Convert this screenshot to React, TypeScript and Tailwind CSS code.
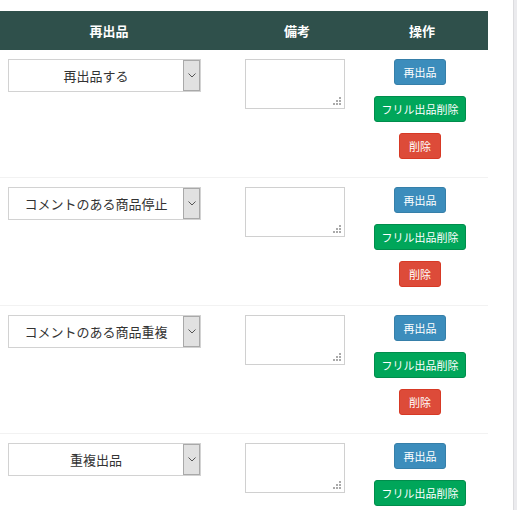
const rows = ["再出品する", "コメントのある商品停止", "コメントのある商品重複", "重複出品"];

function SelectBox({ value }: { value: string }) {
  return (
    <div className="flex h-[33px] w-[193px] border border-[#d2d2d2] bg-white">
      <div className="flex flex-1 items-center justify-center text-[13px] text-[#333]">{value}</div>
      <div className="flex w-[17px] items-center justify-center border border-[#a9a9a9] bg-[#e1e1e1]">
        <svg width="8" height="5" viewBox="0 0 8 5" fill="none">
          <path d="M0.5 0.5 L4 4 L7.5 0.5" stroke="#555" strokeWidth="1" />
        </svg>
      </div>
    </div>
  );
}

function Row({ value }: { value: string }) {
  return (
    <div className="grid h-[128px] grid-cols-[218px_158px_112px] border-b border-[#f2f2f2] pt-[9px]">
      <div className="pl-2">
        <SelectBox value={value} />
      </div>
      <div className="pl-[27px]">
        <div className="relative h-[50px] w-[100px] border border-[#d0d0d0] bg-white">
          <svg className="absolute bottom-[3px] right-[3px]" width="8" height="8" viewBox="0 0 8 8">
            <rect x="6" y="0" width="2" height="2" fill="#aaa" />
            <rect x="3" y="3" width="2" height="2" fill="#aaa" />
            <rect x="6" y="3" width="2" height="2" fill="#aaa" />
            <rect x="0" y="6" width="2" height="2" fill="#aaa" />
            <rect x="3" y="6" width="2" height="2" fill="#aaa" />
            <rect x="6" y="6" width="2" height="2" fill="#aaa" />
          </svg>
        </div>
      </div>
      <div className="flex flex-col items-center gap-[11px] pr-6">
        <button className="h-[26px] w-[52px] rounded-[3px] border border-[#367fa9] bg-[#3c8dbc] text-[11px] text-white">
          再出品
        </button>
        <button className="h-[26px] w-[92px] rounded-[3px] border border-[#008d4c] bg-[#00a65a] text-[11px] text-white">
          フリル出品削除
        </button>
        <button className="h-[26px] w-[42px] rounded-[3px] border border-[#d73925] bg-[#dd4b39] text-[11px] text-white">
          削除
        </button>
      </div>
    </div>
  );
}

export default function App() {
  return (
    <div
      className="flex h-[510px] overflow-hidden bg-white"
      style={{ fontFamily: '"Noto Sans CJK JP", "Noto Sans", sans-serif' }}
    >
      <div className="w-[488px] pt-[11px]">
        <div className="grid h-[39px] grid-cols-[218px_158px_112px] items-center bg-[#2f504b] text-[13px] font-bold text-white">
          <div className="text-center">再出品</div>
          <div className="text-center">備考</div>
          <div className="pr-5 text-center">操作</div>
        </div>
        {rows.map((r) => (
          <Row key={r} value={r} />
        ))}
      </div>
      <div className="flex-1" />
      <div className="h-full w-[4px] border-l border-[#dcdcdf] bg-[#ebebee]" />
    </div>
  );
}
